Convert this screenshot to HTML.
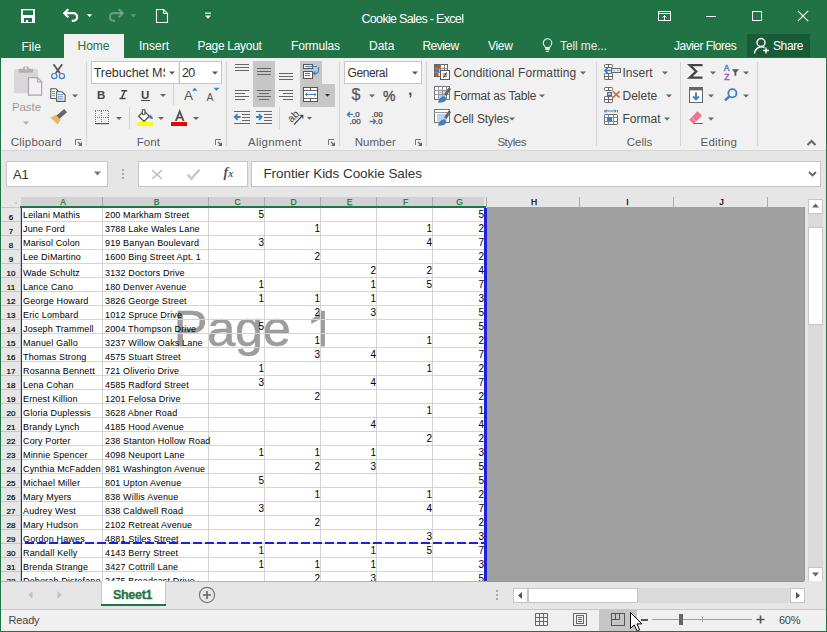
<!DOCTYPE html>
<html><head><meta charset="utf-8"><title>Cookie Sales - Excel</title>
<style>
html,body{margin:0;padding:0;}
body{width:827px;height:632px;position:relative;overflow:hidden;background:#e6e6e6;font-family:"Liberation Sans",sans-serif;}
.t{position:absolute;white-space:nowrap;line-height:20px;font-family:"Liberation Sans",sans-serif;}
.r{position:absolute;}
.s{position:absolute;overflow:visible;}
</style></head><body>
<div class="r" style="left:0px;top:0px;width:827px;height:58px;background:#217346;"></div>
<svg class="s" style="left:20px;top:8px;" width="16" height="16" viewBox="0 0 16 16"><rect x="1" y="1" width="14" height="14" fill="#fff"/><rect x="3" y="2.3" width="10" height="4.7" fill="#217346"/><rect x="4" y="10" width="8" height="4" fill="#217346"/><rect x="6" y="12" width="2" height="2" fill="#fff"/></svg>
<svg class="s" style="left:62px;top:8px;" width="18" height="16" viewBox="0 0 18 16"><path d="M6.3 1.2L2.2 5.2L6.3 9.2" fill="none" stroke="#fff" stroke-width="2.2"/><path d="M3 5.2H11.3a3.8 3.8 0 0 1 0 7.6H9.8" fill="none" stroke="#fff" stroke-width="2.2"/></svg>
<svg class="s" style="left:86px;top:13px;" width="7" height="5" viewBox="0 0 7 5"><path d="M0.8 1.2h5.4l-2.7 3z" fill="#fff"/></svg>
<svg class="s" style="left:107px;top:8px;" width="18" height="16" viewBox="0 0 18 16"><path d="M11.7 1.2L15.8 5.2L11.7 9.2" fill="none" stroke="rgba(255,255,255,0.3)" stroke-width="2.2"/><path d="M15 5.2H6.7a3.8 3.8 0 0 0 0 7.6H8.2" fill="none" stroke="rgba(255,255,255,0.3)" stroke-width="2.2"/></svg>
<svg class="s" style="left:130px;top:13px;" width="7" height="5" viewBox="0 0 7 5"><path d="M0.8 1.2h5.4l-2.7 3z" fill="rgba(255,255,255,0.3)"/></svg>
<svg class="s" style="left:154px;top:8px;" width="16" height="16" viewBox="0 0 16 16"><path d="M2.5 1.5H9.5L13.5 5.5V14.5H2.5Z" fill="none" stroke="#fff" stroke-width="1.1"/><path d="M9.5 1.5V5.5H13.5" fill="none" stroke="#fff" stroke-width="1.1"/></svg>
<svg class="s" style="left:204px;top:12px;" width="8" height="8" viewBox="0 0 8 8"><rect x="1" y="0.6" width="6" height="1.1" fill="#fff"/><path d="M1 3.5h6l-3 3.2z" fill="#fff"/></svg>
<div class="t" style="left:361.5px;top:8.67px;font-size:12.5px;color:#fff;font-weight:400;letter-spacing:-0.68px;">Cookie Sales - Excel</div>
<svg class="s" style="left:657px;top:10px;" width="16" height="12" viewBox="0 0 16 12"><rect x="1.5" y="1.5" width="12" height="9" fill="none" stroke="#fff" stroke-width="1"/><path d="M1.5 3.5h12" stroke="#fff" stroke-width="1"/><path d="M7.5 10V5.5M5.5 7.5L7.5 5.5L9.5 7.5" fill="none" stroke="#fff" stroke-width="1"/></svg>
<div class="r" style="left:706px;top:16px;width:10px;height:1px;background:#fff;"></div>
<svg class="s" style="left:751px;top:10px;" width="12" height="12" viewBox="0 0 12 12"><rect x="1.5" y="1.5" width="9" height="9" fill="none" stroke="#fff" stroke-width="1"/></svg>
<svg class="s" style="left:797px;top:10px;" width="12" height="12" viewBox="0 0 12 12"><path d="M0.8 0.8L11.2 11.2M11.2 0.8L0.8 11.2" stroke="#fff" stroke-width="1.1"/></svg>
<div class="r" style="left:64px;top:34px;width:60px;height:24px;background:#f1f1f1;"></div>
<div class="t" style="left:21.5px;top:36.84px;font-size:12px;color:#ffffff;font-weight:400;letter-spacing:0px;">File</div>
<div class="t" style="left:77.5px;top:35.84px;font-size:12px;color:#217346;font-weight:400;letter-spacing:0px;">Home</div>
<div class="t" style="left:139px;top:35.84px;font-size:12px;color:#ffffff;font-weight:400;letter-spacing:0px;">Insert</div>
<div class="t" style="left:197.5px;top:35.84px;font-size:12px;color:#ffffff;font-weight:400;letter-spacing:-0.3px;">Page Layout</div>
<div class="t" style="left:291px;top:35.84px;font-size:12px;color:#ffffff;font-weight:400;letter-spacing:-0.15px;">Formulas</div>
<div class="t" style="left:369px;top:35.84px;font-size:12px;color:#ffffff;font-weight:400;letter-spacing:0px;">Data</div>
<div class="t" style="left:422.5px;top:35.84px;font-size:12px;color:#ffffff;font-weight:400;letter-spacing:-0.55px;">Review</div>
<div class="t" style="left:488px;top:35.84px;font-size:12px;color:#ffffff;font-weight:400;letter-spacing:-0.3px;">View</div>
<svg class="s" style="left:541px;top:38px;" width="13" height="15" viewBox="0 0 13 15"><path d="M4.6 9.6C3.1 8.1 2.2 6.7 2.2 5.1a4.3 4.3 0 0 1 8.6 0c0 1.6-.9 3-2.4 4.5z" fill="none" stroke="#f0f4f1" stroke-width="1.1"/><rect x="4.3" y="10.1" width="4.4" height="1.9" fill="#f0f4f1"/><rect x="4.8" y="12.9" width="3.4" height="1" fill="#f0f4f1"/></svg>
<div class="t" style="left:560px;top:35.84px;font-size:12px;color:#e3ede6;font-weight:400;letter-spacing:-0.1px;">Tell me...</div>
<div class="t" style="left:674px;top:35.84px;font-size:12px;color:#ffffff;font-weight:400;letter-spacing:-0.5px;">Javier Flores</div>
<div class="r" style="left:747px;top:34px;width:63px;height:23px;background:#185c37;"></div>
<svg class="s" style="left:753px;top:37px;" width="18" height="18" viewBox="0 0 18 18"><circle cx="8" cy="5.5" r="4" fill="none" stroke="#fff" stroke-width="1.4"/><path d="M1.5 16.5a7 7 0 0 1 10-6" fill="none" stroke="#fff" stroke-width="1.4"/><path d="M13 10.5v6M10 13.5h6" stroke="#fff" stroke-width="1.4"/></svg>
<div class="t" style="left:773px;top:35.84px;font-size:12px;color:#ffffff;font-weight:400;letter-spacing:-0.4px;">Share</div>
<div class="r" style="left:1px;top:58px;width:825px;height:92px;background:#f1f1f1;"></div>
<div class="r" style="left:1px;top:150px;width:825px;height:1px;background:#d5d5d5;"></div>
<div class="r" style="left:86px;top:62px;width:1px;height:84px;background:#d4d4d4;"></div>
<div class="r" style="left:226px;top:62px;width:1px;height:84px;background:#d4d4d4;"></div>
<div class="r" style="left:339px;top:62px;width:1px;height:84px;background:#d4d4d4;"></div>
<div class="r" style="left:426px;top:62px;width:1px;height:84px;background:#d4d4d4;"></div>
<div class="r" style="left:596px;top:62px;width:1px;height:84px;background:#d4d4d4;"></div>
<div class="r" style="left:680px;top:62px;width:1px;height:84px;background:#d4d4d4;"></div>
<div class="r" style="left:757px;top:62px;width:1px;height:84px;background:#d4d4d4;"></div>
<div class="t" style="left:10.8px;top:132.02px;font-size:11.5px;color:#5c5c5c;font-weight:400;letter-spacing:0.2px;">Clipboard</div>
<div class="t" style="left:136.7px;top:132.02px;font-size:11.5px;color:#5c5c5c;font-weight:400;letter-spacing:0.1px;">Font</div>
<div class="t" style="left:248px;top:132.02px;font-size:11.5px;color:#5c5c5c;font-weight:400;letter-spacing:0.25px;">Alignment</div>
<div class="t" style="left:354.7px;top:132.02px;font-size:11.5px;color:#5c5c5c;font-weight:400;letter-spacing:0.05px;">Number</div>
<div class="t" style="left:497.4px;top:132.02px;font-size:11.5px;color:#5c5c5c;font-weight:400;letter-spacing:-0.45px;">Styles</div>
<div class="t" style="left:626.7px;top:132.02px;font-size:11.5px;color:#5c5c5c;font-weight:400;letter-spacing:0.0px;">Cells</div>
<div class="t" style="left:700.6px;top:132.02px;font-size:11.5px;color:#5c5c5c;font-weight:400;letter-spacing:0.2px;">Editing</div>
<svg class="s" style="left:74px;top:138px;" width="9" height="9" viewBox="0 0 9 9"><path d="M1.5 7V1.5H7" fill="none" stroke="#777" stroke-width="1"/><path d="M8 4V8H4z" fill="#666"/><path d="M4 4L6.5 6.5" stroke="#666" stroke-width="1.2"/></svg>
<svg class="s" style="left:214px;top:138px;" width="9" height="9" viewBox="0 0 9 9"><path d="M1.5 7V1.5H7" fill="none" stroke="#777" stroke-width="1"/><path d="M8 4V8H4z" fill="#666"/><path d="M4 4L6.5 6.5" stroke="#666" stroke-width="1.2"/></svg>
<svg class="s" style="left:327px;top:138px;" width="9" height="9" viewBox="0 0 9 9"><path d="M1.5 7V1.5H7" fill="none" stroke="#777" stroke-width="1"/><path d="M8 4V8H4z" fill="#666"/><path d="M4 4L6.5 6.5" stroke="#666" stroke-width="1.2"/></svg>
<svg class="s" style="left:414px;top:138px;" width="9" height="9" viewBox="0 0 9 9"><path d="M1.5 7V1.5H7" fill="none" stroke="#777" stroke-width="1"/><path d="M8 4V8H4z" fill="#666"/><path d="M4 4L6.5 6.5" stroke="#666" stroke-width="1.2"/></svg>
<svg class="s" style="left:806px;top:138.5px;" width="11" height="7" viewBox="0 0 11 7"><path d="M1.5 6L5.5 2L9.5 6" fill="none" stroke="#666" stroke-width="2.1"/></svg>
<svg class="s" style="left:13px;top:65px;" width="32" height="33" viewBox="0 0 32 33"><rect x="1" y="4" width="24" height="24.3" rx="1.5" fill="#d9d6d9"/><rect x="10" y="1.6" width="6" height="4" rx="1.6" fill="#b3b0b3"/><rect x="5.8" y="3.8" width="14.2" height="3.9" rx="0.8" fill="#b3b0b3"/><circle cx="13" cy="3.4" r="1.1" fill="#eeeeee"/><path d="M15.5 12.7H24.5L28.6 16.8V30.2H15.5Z" fill="#f4eff4" stroke="#a8a5a8" stroke-width="1.2"/><path d="M24.3 13.2V17H28.2" fill="none" stroke="#a8a5a8" stroke-width="1"/></svg>
<div class="t" style="left:11.9px;top:97.02px;font-size:11.5px;color:#9c9c9c;font-weight:400;letter-spacing:-0.05px;">Paste</div>
<svg class="s" style="left:23px;top:120.5px;" width="6" height="4" viewBox="0 0 6 4"><path d="M0 0.5h6l-3 3z" fill="#a8a8a8"/></svg>
<svg class="s" style="left:46px;top:60px;" width="36" height="68" viewBox="0 0 36 68"><path d="M7.5 4.3L14 13.3M16.2 4.3L9.7 13.3" stroke="#555" stroke-width="1.8"/><circle cx="8.3" cy="16.1" r="2.6" fill="none" stroke="#3f7fc6" stroke-width="1.2"/><circle cx="15.9" cy="16.1" r="2.6" fill="none" stroke="#3f7fc6" stroke-width="1.2"/><path d="M4.8 28.7H9.8L12.2 31.1V38.5H4.8Z" fill="#fff" stroke="#555" stroke-width="1.1"/><rect x="6.2" y="31" width="3" height="0.9" fill="#3f7fc6"/><rect x="6.2" y="33.1" width="3" height="0.9" fill="#3f7fc6"/><rect x="6.2" y="35.3" width="3" height="0.9" fill="#3f7fc6"/><path d="M10.7 31.7H16L19.1 34.8V41.4H10.7Z" fill="#fff" stroke="#555" stroke-width="1.1"/><rect x="12" y="34.3" width="5.3" height="0.9" fill="#3f7fc6"/><rect x="12" y="36.4" width="5.3" height="0.9" fill="#3f7fc6"/><rect x="12" y="38.5" width="5.3" height="0.9" fill="#3f7fc6"/><path d="M4.5 57.5L10.4 54.6L14.8 60L11.5 64.6Z" fill="#e8b865"/><path d="M12 57.2L19.6 50.6" stroke="#666" stroke-width="4.4"/></svg>
<svg class="s" style="left:72px;top:94px;" width="6" height="4" viewBox="0 0 6 4"><path d="M0 0.5h6l-3 3z" fill="#666"/></svg>
<div class="r" style="left:91px;top:61px;width:131px;height:23px;background:#fff;box-sizing:border-box;border:1px solid #c6c6c6"></div>
<div class="r" style="left:178px;top:61px;width:2px;height:23px;background:#c6c6c6;"></div>
<div class="r" style="left:178px;top:62px;width:0.6px;height:21px;background:#e8e8e8;"></div>
<div class="r" style="left:92px;top:62px;width:73px;height:21px;overflow:hidden">
<div class="t" style="left:1.8px;top:0.67px;font-size:12.5px;color:#333;font-weight:400;letter-spacing:-0.1px;">Trebuchet MS</div>
</div>
<svg class="s" style="left:169px;top:71px;" width="6" height="4" viewBox="0 0 6 4"><path d="M0 0.5h6l-3 3z" fill="#555"/></svg>
<div class="t" style="left:182px;top:62.67px;font-size:12.5px;color:#333;font-weight:400;letter-spacing:-0.6px;">20</div>
<svg class="s" style="left:212px;top:71px;" width="6" height="4" viewBox="0 0 6 4"><path d="M0 0.5h6l-3 3z" fill="#555"/></svg>
<div class="t" style="left:97px;top:85.02px;font-size:11.5px;color:#444;font-weight:700;letter-spacing:0px;">B</div>
<div class="t" style="left:141px;top:85.02px;font-size:11.5px;color:#444;font-weight:700;letter-spacing:0px;">U</div>
<div class="r" style="left:141px;top:100px;width:9px;height:1px;background:#444;"></div>
<div class="t" style="left:184px;top:86.32px;font-size:13.5px;color:#555;font-weight:400;letter-spacing:0px;">A</div>
<div class="t" style="left:206.5px;top:87.36px;font-size:10.5px;color:#555;font-weight:400;letter-spacing:0px;">A</div>
<svg class="s" style="left:0;top:0" width="230" height="130"><path d="M121.2 90.8h6M119.5 98.4h6M124.9 90.8L121.6 98.4" fill="none" stroke="#444" stroke-width="1.5"/><path d="M160 94h6l-3 3z" fill="#666"/><path d="M192 90.8h5.5l-2.75-3z" fill="#3f7fc6"/><path d="M213.5 87.8h6l-3 3z" fill="#3f7fc6"/><path d="M95 110.5h14" stroke="#777" stroke-width="1" stroke-dasharray="1 1"/><path d="M95 117.5h14" stroke="#777" stroke-width="1" stroke-dasharray="1 1"/><path d="M95.5 111v12" stroke="#777" stroke-width="1" stroke-dasharray="1 1"/><path d="M101.5 111v12" stroke="#777" stroke-width="1" stroke-dasharray="1 1"/><path d="M108.5 111v12" stroke="#777" stroke-width="1" stroke-dasharray="1 1"/><rect x="95" y="123" width="14" height="1.2" fill="#555"/><path d="M116 117h6l-3 3z" fill="#666"/><path d="M138.7 116.2L144 110.9L149.3 116.2L144 121.5Z" fill="#fff" stroke="#444" stroke-width="1.2"/><rect x="142.3" y="109.8" width="2.6" height="4.5" fill="#fff" stroke="#444" stroke-width="1"/><path d="M149.5 114.5c2 0.8 3.3 2.2 3.5 4.3c-1 .5-2.5 .3-3.5-.8z" fill="#3f7fc6"/><rect x="137" y="122" width="16" height="4" fill="#ffff00"/><path d="M158 117h6l-3 3z" fill="#666"/><path d="M175.8 121L179.7 111.5L183.6 121M177.3 117.6h4.8" fill="none" stroke="#555" stroke-width="1.9"/><rect x="171" y="122" width="16" height="4" fill="#ee0000"/><path d="M193 117h6l-3 3z" fill="#666"/></svg>
<div class="r" style="left:173px;top:84px;width:1px;height:21px;background:#d4d4d4;"></div>
<div class="r" style="left:129px;top:107px;width:1px;height:22px;background:#d4d4d4;"></div>
<div class="r" style="left:253px;top:61px;width:22px;height:46px;background:#c6c6c6;"></div>
<div class="r" style="left:300px;top:61px;width:22px;height:23px;background:#c6c6c6;"></div>
<div class="r" style="left:300px;top:84px;width:35px;height:23px;background:#c6c6c6;"></div>
<svg class="s" style="left:0;top:0" width="340" height="130"><rect x="235" y="64" width="14" height="1" fill="#666"/><rect x="235" y="67" width="14" height="1" fill="#666"/><rect x="235" y="70" width="14" height="1" fill="#666"/><rect x="257" y="68" width="14" height="1" fill="#666"/><rect x="257" y="71" width="14" height="1" fill="#666"/><rect x="257" y="74" width="14" height="1" fill="#666"/><rect x="279" y="73" width="14" height="1" fill="#666"/><rect x="279" y="76" width="14" height="1" fill="#666"/><rect x="279" y="79" width="14" height="1" fill="#666"/><rect x="235" y="90" width="14" height="1" fill="#666"/><rect x="257" y="90" width="14" height="1" fill="#666"/><rect x="279" y="90" width="14" height="1" fill="#666"/><rect x="235" y="93" width="10" height="1" fill="#666"/><rect x="259" y="93" width="10" height="1" fill="#666"/><rect x="283" y="93" width="10" height="1" fill="#666"/><rect x="235" y="96" width="14" height="1" fill="#666"/><rect x="257" y="96" width="14" height="1" fill="#666"/><rect x="279" y="96" width="14" height="1" fill="#666"/><rect x="235" y="99" width="10" height="1" fill="#666"/><rect x="259" y="99" width="10" height="1" fill="#666"/><rect x="283" y="99" width="10" height="1" fill="#666"/><rect x="234" y="111" width="16" height="1" fill="#666"/><rect x="234" y="123" width="16" height="1" fill="#666"/><rect x="242" y="114" width="8" height="1" fill="#666"/><rect x="242" y="117" width="8" height="1" fill="#666"/><rect x="242" y="120" width="8" height="1" fill="#666"/><rect x="256" y="111" width="16" height="1" fill="#666"/><rect x="256" y="123" width="16" height="1" fill="#666"/><rect x="264" y="114" width="8" height="1" fill="#666"/><rect x="264" y="117" width="8" height="1" fill="#666"/><rect x="264" y="120" width="8" height="1" fill="#666"/><rect x="303.5" y="64.5" width="9" height="4" fill="#fff" stroke="#555" stroke-width="1"/><rect x="303.5" y="71.5" width="9" height="7" fill="#fff" stroke="#555" stroke-width="1"/><rect x="305" y="66" width="12" height="1" fill="#3f7fc6"/><rect x="305" y="73" width="5" height="1" fill="#3f7fc6"/><rect x="305" y="75" width="5" height="1" fill="#3f7fc6"/><path d="M318.5 67V70.5a2.8 2.8 0 0 1-2.8 2.8H313.5M315.3 71.3L313.3 73.3L315.3 75.3" fill="none" stroke="#3f7fc6" stroke-width="1.2"/><rect x="303.5" y="87.5" width="14" height="14" fill="#fff" stroke="#555" stroke-width="1"/><rect x="304" y="90" width="13" height="1" fill="#666"/><rect x="304" y="98" width="13" height="1" fill="#666"/><rect x="310" y="88" width="1" height="2" fill="#555"/><rect x="310" y="99" width="1" height="2" fill="#555"/><path d="M305.5 94.5h10.5M307.3 92.7L305.5 94.5L307.3 96.3M314.2 92.7L316 94.5L314.2 96.3" fill="none" stroke="#3f7fc6" stroke-width="1"/><path d="M325 94h5l-2.5 2.8z" fill="#333"/><path d="M235 117h5.5M237.6 114.2L234.8 117L237.6 119.8" fill="none" stroke="#3f7fc6" stroke-width="1.8"/><path d="M256 117h5.5M258.9 114.2L261.7 117L258.9 119.8" fill="none" stroke="#3f7fc6" stroke-width="1.8"/><text x="0" y="0" transform="translate(291.5 123) rotate(-45)" font-family="Liberation Sans" font-size="10.5" fill="#444">ab</text><path d="M294 124.5L302.5 115.5M299.5 115.3h3.3v3.3" fill="none" stroke="#444" stroke-width="1.1"/><path d="M307 117h5l-2.5 2.7z" fill="#666"/></svg>
<div class="r" style="left:279px;top:107px;width:1px;height:22px;background:#d4d4d4;"></div>
<div class="r" style="left:344px;top:61px;width:78px;height:23px;background:#fff;box-sizing:border-box;border:1px solid #c6c6c6"></div>
<div class="t" style="left:347.5px;top:62.84px;font-size:12px;color:#333;font-weight:400;letter-spacing:-0.4px;">General</div>
<svg class="s" style="left:412px;top:71px;" width="6" height="4" viewBox="0 0 6 4"><path d="M0 0.5h6l-3 3z" fill="#555"/></svg>
<div class="t" style="left:351.5px;top:84.96px;font-size:16px;color:#555;font-weight:400;letter-spacing:0px;-webkit-text-stroke:0.2px #555">$</div>
<svg class="s" style="left:369px;top:94px;" width="6" height="4" viewBox="0 0 6 4"><path d="M0 0.5h6l-3 3z" fill="#666"/></svg>
<div class="t" style="left:383px;top:86.15px;font-size:14px;color:#555;font-weight:400;letter-spacing:0px;-webkit-text-stroke:0.4px #555">%</div>
<div class="t" style="left:408px;top:79.96px;font-size:16px;color:#555;font-weight:700;letter-spacing:0px;">,</div>
<svg class="s" style="left:0;top:0" width="430" height="130"><path d="M347.5 114.4h5.5M350 111.9L347.4 114.4L350 116.9" fill="none" stroke="#3f7fc6" stroke-width="1.4"/><text x="353" y="116.6" font-family="Liberation Sans" font-size="8" fill="#444" stroke="#444" stroke-width="0.25">.0</text><text x="349.5" y="123.7" font-family="Liberation Sans" font-size="8" fill="#444" stroke="#444" stroke-width="0.25">.00</text><text x="371.5" y="116.6" font-family="Liberation Sans" font-size="8" fill="#444" stroke="#444" stroke-width="0.25">.00</text><path d="M369.5 121.5h6M373.2 119L375.7 121.5L373.2 124" fill="none" stroke="#3f7fc6" stroke-width="1.4"/><text x="375.8" y="123.7" font-family="Liberation Sans" font-size="8" fill="#444" stroke="#444" stroke-width="0.25">.0</text></svg>
<svg class="s" style="left:0;top:0" width="460" height="130"><rect x="434.5" y="64.5" width="13" height="12" fill="#fff" stroke="#666" stroke-width="1"/><path d="M434.5 68.5h13M434.5 72.5h13M440.5 64.5v12M444.5 64.5v12" stroke="#888" stroke-width="1"/><rect x="435" y="65" width="5.5" height="3" fill="#d24726"/><rect x="435" y="69" width="4.5" height="3" fill="#3f7fc6"/><rect x="435" y="73" width="3.5" height="3" fill="#d24726"/><rect x="440.5" y="70.5" width="9" height="9" fill="#fff" stroke="#555" stroke-width="1"/><path d="M442.8 74h4.4M442.8 76.2h4.4M446.5 72.3L443.5 78" stroke="#333" stroke-width="0.9"/></svg>
<div class="t" style="left:453.4px;top:63.14px;font-size:12px;color:#444;font-weight:400;letter-spacing:0.1px;">Conditional Formatting</div>
<svg class="s" style="left:580px;top:71px;" width="6" height="4" viewBox="0 0 6 4"><path d="M0 0.5h6l-3 3z" fill="#666"/></svg>
<svg class="s" style="left:0;top:0" width="460" height="130"><rect x="434.5" y="86.5" width="15" height="13" fill="#fff" stroke="#777" stroke-width="1"/><rect x="438" y="90" width="8" height="9" fill="#bcd2ee"/><path d="M434.5 90.5h15M434.5 94.5h15M438.5 86.5v13M442.5 86.5v13M446.5 86.5v13" stroke="#999" stroke-width="1"/><path d="M449.8 88.3L445.3 95.3" stroke="#666" stroke-width="3"/><path d="M438 102.6C438.5 99.5 440.5 96.8 443.8 96.2C445.8 96.6 446.6 98.3 446 100C444.5 102 441.5 102.8 438 102.6Z" fill="#3f7fc6"/></svg>
<div class="t" style="left:453.4px;top:85.84px;font-size:12px;color:#444;font-weight:400;letter-spacing:-0.2px;">Format as Table</div>
<svg class="s" style="left:539px;top:94px;" width="6" height="4" viewBox="0 0 6 4"><path d="M0 0.5h6l-3 3z" fill="#666"/></svg>
<svg class="s" style="left:0;top:0" width="460" height="130"><rect x="434.5" y="109.5" width="15" height="13" fill="#fff" stroke="#777" stroke-width="1"/><path d="M434.5 112.5h15" stroke="#999" stroke-width="1"/><rect x="437" y="114" width="10" height="7.5" fill="#bcd2ee"/><path d="M449.8 111.3L445.3 118.3" stroke="#666" stroke-width="3"/><path d="M438 125.6C438.5 122.5 440.5 119.8 443.8 119.2C445.8 119.6 446.6 121.3 446 123C444.5 125 441.5 125.8 438 125.6Z" fill="#3f7fc6"/></svg>
<div class="t" style="left:453.4px;top:108.64px;font-size:12px;color:#444;font-weight:400;letter-spacing:-0.1px;">Cell Styles</div>
<svg class="s" style="left:509px;top:117px;" width="6" height="4" viewBox="0 0 6 4"><path d="M0 0.5h6l-3 3z" fill="#666"/></svg>
<svg class="s" style="left:0;top:0" width="625" height="130"><rect x="604.5" y="64.5" width="8" height="3" rx="0.8" fill="#fff" stroke="#666" stroke-width="1"/><path d="M608.5 64.5v3" stroke="#666"/><rect x="604.5" y="73.5" width="8" height="6" rx="0.8" fill="#fff" stroke="#666" stroke-width="1"/><path d="M604.5 76.5h8M608.5 73.5v6" stroke="#666"/><rect x="611.5" y="68.5" width="9" height="4" fill="#fff" stroke="#666" stroke-width="1"/><rect x="612.5" y="69.5" width="3" height="2" fill="#a9c4e6"/><rect x="616.5" y="69.5" width="3" height="2" fill="#a9c4e6"/><path d="M610.8 70.5H605M607.6 67.9L605 70.5L607.6 73.1" fill="none" stroke="#3f7fc6" stroke-width="1.6"/></svg>
<div class="t" style="left:622.5px;top:62.84px;font-size:12px;color:#444;font-weight:400;letter-spacing:0px;">Insert</div>
<svg class="s" style="left:662px;top:71px;" width="6" height="4" viewBox="0 0 6 4"><path d="M0 0.5h6l-3 3z" fill="#666"/></svg>
<svg class="s" style="left:0;top:0" width="625" height="130"><rect x="604.5" y="87.5" width="8" height="3" rx="0.8" fill="#fff" stroke="#666" stroke-width="1"/><path d="M608.5 87.5v3" stroke="#666"/><rect x="604.5" y="96.5" width="8" height="6" rx="0.8" fill="#fff" stroke="#666" stroke-width="1"/><path d="M604.5 99.5h8M608.5 96.5v6" stroke="#666"/><rect x="607.5" y="92.5" width="4" height="3" fill="#a9c4e6" stroke="#666" stroke-width="1"/><path d="M612.8 91.3L619.6 97.6M619.6 91.3L612.8 97.6" stroke="#e0653a" stroke-width="1.6"/></svg>
<div class="t" style="left:622.5px;top:86.14px;font-size:12px;color:#444;font-weight:400;letter-spacing:0px;">Delete</div>
<svg class="s" style="left:666px;top:94px;" width="6" height="4" viewBox="0 0 6 4"><path d="M0 0.5h6l-3 3z" fill="#666"/></svg>
<svg class="s" style="left:0;top:0" width="625" height="130"><path d="M605.5 111h10.5M607 109.6L605.3 111L607 112.4M614.5 109.6L616.2 111L614.5 112.4" fill="none" stroke="#3f7fc6" stroke-width="1"/><rect x="604.3" y="110" width="1" height="2.5" fill="#3f7fc6"/><rect x="617" y="110" width="1" height="2.5" fill="#3f7fc6"/><rect x="604.5" y="114.5" width="13" height="10" rx="0.8" fill="#fff" stroke="#666" stroke-width="1"/><path d="M604.5 117.5h13M604.5 121.5h13M608.5 114.5v10M613.5 114.5v10" stroke="#888" stroke-width="1"/><rect x="607" y="117" width="5" height="4.5" fill="#3f7fc6"/></svg>
<div class="t" style="left:622.5px;top:109.14px;font-size:12px;color:#444;font-weight:400;letter-spacing:0px;">Format</div>
<svg class="s" style="left:664px;top:117px;" width="6" height="4" viewBox="0 0 6 4"><path d="M0 0.5h6l-3 3z" fill="#666"/></svg>
<svg class="s" style="left:0;top:0" width="760" height="130"><path d="M702.5 65.2H689.8L696.3 71.4L689.8 77.6H702.5" fill="none" stroke="#444" stroke-width="2.3"/><path d="M710 71.5h6l-3 3z" fill="#666"/><text x="723.8" y="70.8" font-family="Liberation Sans" font-size="8.5" font-weight="400" fill="#3f7fc6" stroke="#3f7fc6" stroke-width="0.4">A</text><text x="724.3" y="80" font-family="Liberation Sans" font-size="8.5" font-weight="400" fill="#9a5cc8" stroke="#9a5cc8" stroke-width="0.4">Z</text><path d="M731.8 69.2h7.2l-2.7 3.3v3.2h-1.8v-3.2z" fill="#555"/><path d="M743 71.5h6l-3 3z" fill="#666"/><rect x="689.5" y="87.5" width="13" height="15" fill="#fff" stroke="#666" stroke-width="1"/><rect x="689" y="87" width="14" height="3.4" fill="#666"/><path d="M696 92.3v7M693 96.3l3 3l3-3" fill="none" stroke="#3f7fc6" stroke-width="1.9"/><path d="M708 94.5h6l-3 3z" fill="#666"/><circle cx="732.4" cy="93.3" r="4.1" fill="none" stroke="#3f7fc6" stroke-width="1.8"/><path d="M729.3 96.5L725 100.4" stroke="#3f7fc6" stroke-width="2.5"/><path d="M743 94.5h6l-3 3z" fill="#666"/><path d="M689.2 119.8L697.5 111.2L702 115.4L693.6 124Z" fill="#e8758a"/><path d="M691.6 117.3L696 121.6" stroke="#f3c2cc" stroke-width="0.9"/><rect x="694" y="123" width="9" height="0.9" fill="#555"/><path d="M708 117.5h6l-3 3z" fill="#666"/></svg>
<div class="r" style="left:1px;top:151px;width:825px;height:46px;background:#e6e6e6;"></div>
<div class="r" style="left:6px;top:161px;width:102px;height:26px;background:#fff;box-sizing:border-box;border:1px solid #c6c6c6"></div>
<div class="t" style="left:13px;top:164.50px;font-size:13px;color:#333;font-weight:400;letter-spacing:-0.2px;">A1</div>
<svg class="s" style="left:94px;top:171px;" width="7" height="5" viewBox="0 0 7 5"><path d="M0 0.5h7l-3.5 4z" fill="#777"/></svg>
<div class="r" style="left:122px;top:169px;width:2px;height:2px;background:#a8a8a8;"></div>
<div class="r" style="left:122px;top:173px;width:2px;height:2px;background:#a8a8a8;"></div>
<div class="r" style="left:122px;top:177px;width:2px;height:2px;background:#a8a8a8;"></div>
<div class="r" style="left:138px;top:161px;width:110px;height:26px;background:#fff;box-sizing:border-box;border:1px solid #c6c6c6"></div>
<svg class="s" style="left:151px;top:169px;" width="12" height="11" viewBox="0 0 12 11"><path d="M1.2 1.2L10.8 9.8M10.8 1.2L1.2 9.8" stroke="#c4c4c4" stroke-width="1.6"/></svg>
<svg class="s" style="left:186px;top:168px;" width="15" height="13" viewBox="0 0 15 13"><path d="M1.5 6.5L5.5 10.8L13.5 1.5" fill="none" stroke="#cbcbcb" stroke-width="2.6"/></svg>
<div class="t" style="left:223.5px;top:162.65px;font-size:14px;color:#555;font-weight:400;letter-spacing:0px;font-family:Liberation Serif,serif;font-weight:700"><i>f</i><span style="font-size:10px;position:relative;top:0.5px"><i>x</i></span></div>
<div class="r" style="left:251px;top:161px;width:570px;height:26px;background:#fff;box-sizing:border-box;border:1px solid #c6c6c6"></div>
<div class="t" style="left:263.4px;top:164.32px;font-size:13.5px;color:#333;font-weight:400;letter-spacing:-0.05px;">Frontier Kids Cookie Sales</div>
<svg class="s" style="left:808px;top:171px;" width="9" height="6" viewBox="0 0 9 6"><path d="M1 1L4.5 4.5L8 1" fill="none" stroke="#666" stroke-width="1.8"/></svg>
<div class="r" style="left:1px;top:197px;width:20px;height:9px;background:#e6e6e6;"></div>
<svg class="s" style="left:14px;top:201px;" width="3" height="3" viewBox="0 0 3 3"><path d="M3 0V3H0z" fill="#c8c8c8"/></svg>
<div class="r" style="left:1px;top:207px;width:19px;height:1px;background:#c6c6c6;"></div>
<div class="r" style="left:21px;top:197px;width:463px;height:9px;background:#d2d2d2;"></div>
<div class="r" style="left:102px;top:197px;width:1px;height:9px;background:#ababab;"></div>
<div class="r" style="left:208px;top:197px;width:1px;height:9px;background:#ababab;"></div>
<div class="r" style="left:264px;top:197px;width:1px;height:9px;background:#ababab;"></div>
<div class="r" style="left:320px;top:197px;width:1px;height:9px;background:#ababab;"></div>
<div class="r" style="left:376px;top:197px;width:1px;height:9px;background:#ababab;"></div>
<div class="r" style="left:432px;top:197px;width:1px;height:9px;background:#ababab;"></div>
<div class="r" style="left:20px;top:206px;width:466px;height:2px;background:#217346;"></div>
<div class="t" style="left:22.5px;top:192.1px;width:81px;text-align:center;font-size:8.5px;color:#217346;font-weight:400;-webkit-text-stroke:0.25px #217346">A</div>
<div class="t" style="left:103.5px;top:192.1px;width:106px;text-align:center;font-size:8.5px;color:#217346;font-weight:400;-webkit-text-stroke:0.25px #217346">B</div>
<div class="t" style="left:209.5px;top:192.1px;width:56px;text-align:center;font-size:8.5px;color:#217346;font-weight:400;-webkit-text-stroke:0.25px #217346">C</div>
<div class="t" style="left:265.5px;top:192.1px;width:56px;text-align:center;font-size:8.5px;color:#217346;font-weight:400;-webkit-text-stroke:0.25px #217346">D</div>
<div class="t" style="left:321.5px;top:192.1px;width:56px;text-align:center;font-size:8.5px;color:#217346;font-weight:400;-webkit-text-stroke:0.25px #217346">E</div>
<div class="t" style="left:377.5px;top:192.1px;width:56px;text-align:center;font-size:8.5px;color:#217346;font-weight:400;-webkit-text-stroke:0.25px #217346">F</div>
<div class="t" style="left:433.5px;top:192.1px;width:52px;text-align:center;font-size:8.5px;color:#217346;font-weight:400;-webkit-text-stroke:0.25px #217346">G</div>
<div class="t" style="left:488px;top:192.1px;width:92px;text-align:center;font-size:8.5px;color:#000;font-weight:400;-webkit-text-stroke:0.25px #000">H</div>
<div class="t" style="left:581px;top:192.1px;width:93px;text-align:center;font-size:8.5px;color:#000;font-weight:400;-webkit-text-stroke:0.25px #000">I</div>
<div class="t" style="left:675px;top:192.1px;width:93px;text-align:center;font-size:8.5px;color:#000;font-weight:400;-webkit-text-stroke:0.25px #000">J</div>
<div class="r" style="left:486px;top:197px;width:1px;height:10px;background:#a9a9a9;"></div>
<div class="r" style="left:579px;top:197px;width:1px;height:10px;background:#a9a9a9;"></div>
<div class="r" style="left:673px;top:197px;width:1px;height:10px;background:#a9a9a9;"></div>
<div class="r" style="left:767px;top:197px;width:1px;height:10px;background:#a9a9a9;"></div>
<div class="r" style="left:487px;top:207px;width:318px;height:375px;background:#a0a0a0;box-sizing:border-box;border-right:1px solid #979797;border-bottom:1px solid #979797;border-bottom-right-radius:2px"></div>
<div class="r" style="left:1px;top:208px;width:19px;height:373px;background:#e6e6e6;"></div>
<div class="r" style="left:20px;top:208px;width:1px;height:373px;background:#c6c6c6;"></div>
<div class="r" style="left:21px;top:208px;width:465px;height:373px;background:#fff;"></div>
<div class="t" style="left:173.8px;top:319.30px;font-size:50.5px;color:#9d9d9d;font-weight:400;letter-spacing:-0.3px;-webkit-text-stroke:0.6px #9d9d9d">Page</div>
<svg class="s" style="left:305px;top:308px;" width="24" height="42" viewBox="0 0 24 42"><path d="M15.2 2.8H19.9V38.4H15.2V10.3C13.2 12.3 10.2 14.3 6.2 15.8V11.3C10.2 9.5 13.7 6.3 15.2 2.8Z" fill="#9d9d9d"/></svg>
<div class="r" style="left:0;top:0;width:827px;height:581px;overflow:hidden">
<div class="r" style="left:21px;top:221px;width:465px;height:1px;background:#d4d4d4;"></div>
<div class="r" style="left:1px;top:221px;width:19px;height:1px;background:#c6c6c6;"></div>
<div class="r" style="left:21px;top:235px;width:465px;height:1px;background:#d4d4d4;"></div>
<div class="r" style="left:1px;top:235px;width:19px;height:1px;background:#c6c6c6;"></div>
<div class="r" style="left:21px;top:249px;width:465px;height:1px;background:#d4d4d4;"></div>
<div class="r" style="left:1px;top:249px;width:19px;height:1px;background:#c6c6c6;"></div>
<div class="r" style="left:21px;top:263px;width:465px;height:1px;background:#d4d4d4;"></div>
<div class="r" style="left:1px;top:263px;width:19px;height:1px;background:#c6c6c6;"></div>
<div class="r" style="left:21px;top:277px;width:465px;height:1px;background:#d4d4d4;"></div>
<div class="r" style="left:1px;top:277px;width:19px;height:1px;background:#c6c6c6;"></div>
<div class="r" style="left:21px;top:291px;width:465px;height:1px;background:#d4d4d4;"></div>
<div class="r" style="left:1px;top:291px;width:19px;height:1px;background:#c6c6c6;"></div>
<div class="r" style="left:21px;top:305px;width:465px;height:1px;background:#d4d4d4;"></div>
<div class="r" style="left:1px;top:305px;width:19px;height:1px;background:#c6c6c6;"></div>
<div class="r" style="left:21px;top:319px;width:465px;height:1px;background:#d4d4d4;"></div>
<div class="r" style="left:1px;top:319px;width:19px;height:1px;background:#c6c6c6;"></div>
<div class="r" style="left:21px;top:333px;width:465px;height:1px;background:#d4d4d4;"></div>
<div class="r" style="left:1px;top:333px;width:19px;height:1px;background:#c6c6c6;"></div>
<div class="r" style="left:21px;top:347px;width:465px;height:1px;background:#d4d4d4;"></div>
<div class="r" style="left:1px;top:347px;width:19px;height:1px;background:#c6c6c6;"></div>
<div class="r" style="left:21px;top:361px;width:465px;height:1px;background:#d4d4d4;"></div>
<div class="r" style="left:1px;top:361px;width:19px;height:1px;background:#c6c6c6;"></div>
<div class="r" style="left:21px;top:375px;width:465px;height:1px;background:#d4d4d4;"></div>
<div class="r" style="left:1px;top:375px;width:19px;height:1px;background:#c6c6c6;"></div>
<div class="r" style="left:21px;top:389px;width:465px;height:1px;background:#d4d4d4;"></div>
<div class="r" style="left:1px;top:389px;width:19px;height:1px;background:#c6c6c6;"></div>
<div class="r" style="left:21px;top:403px;width:465px;height:1px;background:#d4d4d4;"></div>
<div class="r" style="left:1px;top:403px;width:19px;height:1px;background:#c6c6c6;"></div>
<div class="r" style="left:21px;top:417px;width:465px;height:1px;background:#d4d4d4;"></div>
<div class="r" style="left:1px;top:417px;width:19px;height:1px;background:#c6c6c6;"></div>
<div class="r" style="left:21px;top:431px;width:465px;height:1px;background:#d4d4d4;"></div>
<div class="r" style="left:1px;top:431px;width:19px;height:1px;background:#c6c6c6;"></div>
<div class="r" style="left:21px;top:445px;width:465px;height:1px;background:#d4d4d4;"></div>
<div class="r" style="left:1px;top:445px;width:19px;height:1px;background:#c6c6c6;"></div>
<div class="r" style="left:21px;top:459px;width:465px;height:1px;background:#d4d4d4;"></div>
<div class="r" style="left:1px;top:459px;width:19px;height:1px;background:#c6c6c6;"></div>
<div class="r" style="left:21px;top:473px;width:465px;height:1px;background:#d4d4d4;"></div>
<div class="r" style="left:1px;top:473px;width:19px;height:1px;background:#c6c6c6;"></div>
<div class="r" style="left:21px;top:487px;width:465px;height:1px;background:#d4d4d4;"></div>
<div class="r" style="left:1px;top:487px;width:19px;height:1px;background:#c6c6c6;"></div>
<div class="r" style="left:21px;top:501px;width:465px;height:1px;background:#d4d4d4;"></div>
<div class="r" style="left:1px;top:501px;width:19px;height:1px;background:#c6c6c6;"></div>
<div class="r" style="left:21px;top:515px;width:465px;height:1px;background:#d4d4d4;"></div>
<div class="r" style="left:1px;top:515px;width:19px;height:1px;background:#c6c6c6;"></div>
<div class="r" style="left:21px;top:529px;width:465px;height:1px;background:#d4d4d4;"></div>
<div class="r" style="left:1px;top:529px;width:19px;height:1px;background:#c6c6c6;"></div>
<div class="r" style="left:21px;top:543px;width:465px;height:1px;background:#d4d4d4;"></div>
<div class="r" style="left:1px;top:543px;width:19px;height:1px;background:#c6c6c6;"></div>
<div class="r" style="left:21px;top:557px;width:465px;height:1px;background:#d4d4d4;"></div>
<div class="r" style="left:1px;top:557px;width:19px;height:1px;background:#c6c6c6;"></div>
<div class="r" style="left:21px;top:571px;width:465px;height:1px;background:#d4d4d4;"></div>
<div class="r" style="left:1px;top:571px;width:19px;height:1px;background:#c6c6c6;"></div>
<div class="r" style="left:21px;top:585px;width:465px;height:1px;background:#d4d4d4;"></div>
<div class="r" style="left:1px;top:585px;width:19px;height:1px;background:#c6c6c6;"></div>
<div class="r" style="left:102px;top:208px;width:1px;height:373px;background:#d4d4d4;"></div>
<div class="r" style="left:208px;top:208px;width:1px;height:373px;background:#d4d4d4;"></div>
<div class="r" style="left:264px;top:208px;width:1px;height:373px;background:#d4d4d4;"></div>
<div class="r" style="left:320px;top:208px;width:1px;height:373px;background:#d4d4d4;"></div>
<div class="r" style="left:376px;top:208px;width:1px;height:373px;background:#d4d4d4;"></div>
<div class="r" style="left:432px;top:208px;width:1px;height:373px;background:#d4d4d4;"></div>
<div class="t" style="left:1px;top:207.73px;width:20px;text-align:center;font-size:8px;color:#000;font-weight:400;-webkit-text-stroke:0.2px #000">6</div>
<div class="r" style="left:23px;top:204px;width:79px;height:20px;overflow:hidden">
<div class="t" style="left:0px;top:0.88px;font-size:9px;color:#000;font-weight:400;letter-spacing:0.15px;">Leilani Mathis</div>
</div>
<div class="r" style="left:105px;top:204px;width:103px;height:20px;overflow:hidden">
<div class="t" style="left:0px;top:0.88px;font-size:9px;color:#000;font-weight:400;letter-spacing:0.15px;">200 Markham Street</div>
</div>
<div class="t" style="left:244px;top:204.53px;width:20px;text-align:right;font-size:10px;color:#000">5</div>
<div class="t" style="left:464px;top:204.53px;width:20px;text-align:right;font-size:10px;color:#000">5</div>
<div class="t" style="left:1px;top:221.73px;width:20px;text-align:center;font-size:8px;color:#000;font-weight:400;-webkit-text-stroke:0.2px #000">7</div>
<div class="r" style="left:23px;top:218px;width:79px;height:20px;overflow:hidden">
<div class="t" style="left:0px;top:0.88px;font-size:9px;color:#000;font-weight:400;letter-spacing:0.15px;">June Ford</div>
</div>
<div class="r" style="left:105px;top:218px;width:200px;height:20px;overflow:hidden">
<div class="t" style="left:0px;top:0.88px;font-size:9px;color:#000;font-weight:400;letter-spacing:0.15px;">3788 Lake Wales Lane</div>
</div>
<div class="t" style="left:300px;top:218.53px;width:20px;text-align:right;font-size:10px;color:#000">1</div>
<div class="t" style="left:412px;top:218.53px;width:20px;text-align:right;font-size:10px;color:#000">1</div>
<div class="t" style="left:464px;top:218.53px;width:20px;text-align:right;font-size:10px;color:#000">2</div>
<div class="t" style="left:1px;top:235.73px;width:20px;text-align:center;font-size:8px;color:#000;font-weight:400;-webkit-text-stroke:0.2px #000">8</div>
<div class="r" style="left:23px;top:232px;width:79px;height:20px;overflow:hidden">
<div class="t" style="left:0px;top:0.88px;font-size:9px;color:#000;font-weight:400;letter-spacing:0.15px;">Marisol Colon</div>
</div>
<div class="r" style="left:105px;top:232px;width:103px;height:20px;overflow:hidden">
<div class="t" style="left:0px;top:0.88px;font-size:9px;color:#000;font-weight:400;letter-spacing:0.15px;">919 Banyan Boulevard</div>
</div>
<div class="t" style="left:244px;top:232.53px;width:20px;text-align:right;font-size:10px;color:#000">3</div>
<div class="t" style="left:412px;top:232.53px;width:20px;text-align:right;font-size:10px;color:#000">4</div>
<div class="t" style="left:464px;top:232.53px;width:20px;text-align:right;font-size:10px;color:#000">7</div>
<div class="t" style="left:1px;top:249.73px;width:20px;text-align:center;font-size:8px;color:#000;font-weight:400;-webkit-text-stroke:0.2px #000">9</div>
<div class="r" style="left:23px;top:246px;width:79px;height:20px;overflow:hidden">
<div class="t" style="left:0px;top:0.88px;font-size:9px;color:#000;font-weight:400;letter-spacing:0.15px;">Lee DiMartino</div>
</div>
<div class="r" style="left:105px;top:246px;width:200px;height:20px;overflow:hidden">
<div class="t" style="left:0px;top:0.88px;font-size:9px;color:#000;font-weight:400;letter-spacing:0.15px;">1600 Bing Street Apt. 1</div>
</div>
<div class="t" style="left:300px;top:246.53px;width:20px;text-align:right;font-size:10px;color:#000">2</div>
<div class="t" style="left:464px;top:246.53px;width:20px;text-align:right;font-size:10px;color:#000">2</div>
<div class="t" style="left:1px;top:263.73px;width:20px;text-align:center;font-size:8px;color:#000;font-weight:400;-webkit-text-stroke:0.2px #000">10</div>
<div class="r" style="left:23px;top:260px;width:79px;height:20px;overflow:hidden">
<div class="t" style="left:0px;top:2.88px;font-size:9px;color:#000;font-weight:400;letter-spacing:0.15px;">Wade Schultz</div>
</div>
<div class="r" style="left:105px;top:260px;width:200px;height:20px;overflow:hidden">
<div class="t" style="left:0px;top:2.88px;font-size:9px;color:#000;font-weight:400;letter-spacing:0.15px;">3132 Doctors Drive</div>
</div>
<div class="t" style="left:356px;top:260.54px;width:20px;text-align:right;font-size:10px;color:#000">2</div>
<div class="t" style="left:412px;top:260.54px;width:20px;text-align:right;font-size:10px;color:#000">2</div>
<div class="t" style="left:464px;top:260.54px;width:20px;text-align:right;font-size:10px;color:#000">4</div>
<div class="t" style="left:1px;top:277.73px;width:20px;text-align:center;font-size:8px;color:#000;font-weight:400;-webkit-text-stroke:0.2px #000">11</div>
<div class="r" style="left:23px;top:274px;width:79px;height:20px;overflow:hidden">
<div class="t" style="left:0px;top:2.88px;font-size:9px;color:#000;font-weight:400;letter-spacing:0.15px;">Lance Cano</div>
</div>
<div class="r" style="left:105px;top:274px;width:103px;height:20px;overflow:hidden">
<div class="t" style="left:0px;top:2.88px;font-size:9px;color:#000;font-weight:400;letter-spacing:0.15px;">180 Denver Avenue</div>
</div>
<div class="t" style="left:244px;top:274.54px;width:20px;text-align:right;font-size:10px;color:#000">1</div>
<div class="t" style="left:356px;top:274.54px;width:20px;text-align:right;font-size:10px;color:#000">1</div>
<div class="t" style="left:412px;top:274.54px;width:20px;text-align:right;font-size:10px;color:#000">5</div>
<div class="t" style="left:464px;top:274.54px;width:20px;text-align:right;font-size:10px;color:#000">7</div>
<div class="t" style="left:1px;top:291.73px;width:20px;text-align:center;font-size:8px;color:#000;font-weight:400;-webkit-text-stroke:0.2px #000">12</div>
<div class="r" style="left:23px;top:288px;width:79px;height:20px;overflow:hidden">
<div class="t" style="left:0px;top:2.88px;font-size:9px;color:#000;font-weight:400;letter-spacing:0.15px;">George Howard</div>
</div>
<div class="r" style="left:105px;top:288px;width:103px;height:20px;overflow:hidden">
<div class="t" style="left:0px;top:2.88px;font-size:9px;color:#000;font-weight:400;letter-spacing:0.15px;">3826 George Street</div>
</div>
<div class="t" style="left:244px;top:288.54px;width:20px;text-align:right;font-size:10px;color:#000">1</div>
<div class="t" style="left:300px;top:288.54px;width:20px;text-align:right;font-size:10px;color:#000">1</div>
<div class="t" style="left:356px;top:288.54px;width:20px;text-align:right;font-size:10px;color:#000">1</div>
<div class="t" style="left:464px;top:288.54px;width:20px;text-align:right;font-size:10px;color:#000">3</div>
<div class="t" style="left:1px;top:305.73px;width:20px;text-align:center;font-size:8px;color:#000;font-weight:400;-webkit-text-stroke:0.2px #000">13</div>
<div class="r" style="left:23px;top:302px;width:79px;height:20px;overflow:hidden">
<div class="t" style="left:0px;top:2.88px;font-size:9px;color:#000;font-weight:400;letter-spacing:0.15px;">Eric Lombard</div>
</div>
<div class="r" style="left:105px;top:302px;width:200px;height:20px;overflow:hidden">
<div class="t" style="left:0px;top:2.88px;font-size:9px;color:#000;font-weight:400;letter-spacing:0.15px;">1012 Spruce Drive</div>
</div>
<div class="t" style="left:300px;top:302.54px;width:20px;text-align:right;font-size:10px;color:#000">2</div>
<div class="t" style="left:356px;top:302.54px;width:20px;text-align:right;font-size:10px;color:#000">3</div>
<div class="t" style="left:464px;top:302.54px;width:20px;text-align:right;font-size:10px;color:#000">5</div>
<div class="t" style="left:1px;top:319.73px;width:20px;text-align:center;font-size:8px;color:#000;font-weight:400;-webkit-text-stroke:0.2px #000">14</div>
<div class="r" style="left:23px;top:316px;width:79px;height:20px;overflow:hidden">
<div class="t" style="left:0px;top:2.88px;font-size:9px;color:#000;font-weight:400;letter-spacing:0.15px;">Joseph Trammell</div>
</div>
<div class="r" style="left:105px;top:316px;width:103px;height:20px;overflow:hidden">
<div class="t" style="left:0px;top:2.88px;font-size:9px;color:#000;font-weight:400;letter-spacing:0.15px;">2004 Thompson Drive</div>
</div>
<div class="t" style="left:244px;top:316.54px;width:20px;text-align:right;font-size:10px;color:#000">5</div>
<div class="t" style="left:464px;top:316.54px;width:20px;text-align:right;font-size:10px;color:#000">5</div>
<div class="t" style="left:1px;top:333.73px;width:20px;text-align:center;font-size:8px;color:#000;font-weight:400;-webkit-text-stroke:0.2px #000">15</div>
<div class="r" style="left:23px;top:330px;width:79px;height:20px;overflow:hidden">
<div class="t" style="left:0px;top:2.88px;font-size:9px;color:#000;font-weight:400;letter-spacing:0.15px;">Manuel Gallo</div>
</div>
<div class="r" style="left:105px;top:330px;width:200px;height:20px;overflow:hidden">
<div class="t" style="left:0px;top:2.88px;font-size:9px;color:#000;font-weight:400;letter-spacing:0.15px;">3237 Willow Oaks Lane</div>
</div>
<div class="t" style="left:300px;top:330.54px;width:20px;text-align:right;font-size:10px;color:#000">1</div>
<div class="t" style="left:412px;top:330.54px;width:20px;text-align:right;font-size:10px;color:#000">1</div>
<div class="t" style="left:464px;top:330.54px;width:20px;text-align:right;font-size:10px;color:#000">2</div>
<div class="t" style="left:1px;top:347.73px;width:20px;text-align:center;font-size:8px;color:#000;font-weight:400;-webkit-text-stroke:0.2px #000">16</div>
<div class="r" style="left:23px;top:344px;width:79px;height:20px;overflow:hidden">
<div class="t" style="left:0px;top:2.88px;font-size:9px;color:#000;font-weight:400;letter-spacing:0.15px;">Thomas Strong</div>
</div>
<div class="r" style="left:105px;top:344px;width:200px;height:20px;overflow:hidden">
<div class="t" style="left:0px;top:2.88px;font-size:9px;color:#000;font-weight:400;letter-spacing:0.15px;">4575 Stuart Street</div>
</div>
<div class="t" style="left:300px;top:344.54px;width:20px;text-align:right;font-size:10px;color:#000">3</div>
<div class="t" style="left:356px;top:344.54px;width:20px;text-align:right;font-size:10px;color:#000">4</div>
<div class="t" style="left:464px;top:344.54px;width:20px;text-align:right;font-size:10px;color:#000">7</div>
<div class="t" style="left:1px;top:361.73px;width:20px;text-align:center;font-size:8px;color:#000;font-weight:400;-webkit-text-stroke:0.2px #000">17</div>
<div class="r" style="left:23px;top:358px;width:79px;height:20px;overflow:hidden">
<div class="t" style="left:0px;top:2.88px;font-size:9px;color:#000;font-weight:400;letter-spacing:0.15px;">Rosanna Bennett</div>
</div>
<div class="r" style="left:105px;top:358px;width:103px;height:20px;overflow:hidden">
<div class="t" style="left:0px;top:2.88px;font-size:9px;color:#000;font-weight:400;letter-spacing:0.15px;">721 Oliverio Drive</div>
</div>
<div class="t" style="left:244px;top:358.54px;width:20px;text-align:right;font-size:10px;color:#000">1</div>
<div class="t" style="left:412px;top:358.54px;width:20px;text-align:right;font-size:10px;color:#000">1</div>
<div class="t" style="left:464px;top:358.54px;width:20px;text-align:right;font-size:10px;color:#000">2</div>
<div class="t" style="left:1px;top:375.73px;width:20px;text-align:center;font-size:8px;color:#000;font-weight:400;-webkit-text-stroke:0.2px #000">18</div>
<div class="r" style="left:23px;top:372px;width:79px;height:20px;overflow:hidden">
<div class="t" style="left:0px;top:2.88px;font-size:9px;color:#000;font-weight:400;letter-spacing:0.15px;">Lena Cohan</div>
</div>
<div class="r" style="left:105px;top:372px;width:103px;height:20px;overflow:hidden">
<div class="t" style="left:0px;top:2.88px;font-size:9px;color:#000;font-weight:400;letter-spacing:0.15px;">4585 Radford Street</div>
</div>
<div class="t" style="left:244px;top:372.54px;width:20px;text-align:right;font-size:10px;color:#000">3</div>
<div class="t" style="left:356px;top:372.54px;width:20px;text-align:right;font-size:10px;color:#000">4</div>
<div class="t" style="left:464px;top:372.54px;width:20px;text-align:right;font-size:10px;color:#000">7</div>
<div class="t" style="left:1px;top:389.73px;width:20px;text-align:center;font-size:8px;color:#000;font-weight:400;-webkit-text-stroke:0.2px #000">19</div>
<div class="r" style="left:23px;top:386px;width:79px;height:20px;overflow:hidden">
<div class="t" style="left:0px;top:2.88px;font-size:9px;color:#000;font-weight:400;letter-spacing:0.15px;">Ernest Killion</div>
</div>
<div class="r" style="left:105px;top:386px;width:200px;height:20px;overflow:hidden">
<div class="t" style="left:0px;top:2.88px;font-size:9px;color:#000;font-weight:400;letter-spacing:0.15px;">1201 Felosa Drive</div>
</div>
<div class="t" style="left:300px;top:386.54px;width:20px;text-align:right;font-size:10px;color:#000">2</div>
<div class="t" style="left:464px;top:386.54px;width:20px;text-align:right;font-size:10px;color:#000">2</div>
<div class="t" style="left:1px;top:403.73px;width:20px;text-align:center;font-size:8px;color:#000;font-weight:400;-webkit-text-stroke:0.2px #000">20</div>
<div class="r" style="left:23px;top:400px;width:79px;height:20px;overflow:hidden">
<div class="t" style="left:0px;top:2.88px;font-size:9px;color:#000;font-weight:400;letter-spacing:0.15px;">Gloria Duplessis</div>
</div>
<div class="r" style="left:105px;top:400px;width:200px;height:20px;overflow:hidden">
<div class="t" style="left:0px;top:2.88px;font-size:9px;color:#000;font-weight:400;letter-spacing:0.15px;">3628 Abner Road</div>
</div>
<div class="t" style="left:412px;top:400.54px;width:20px;text-align:right;font-size:10px;color:#000">1</div>
<div class="t" style="left:464px;top:400.54px;width:20px;text-align:right;font-size:10px;color:#000">1</div>
<div class="t" style="left:1px;top:417.73px;width:20px;text-align:center;font-size:8px;color:#000;font-weight:400;-webkit-text-stroke:0.2px #000">21</div>
<div class="r" style="left:23px;top:414px;width:79px;height:20px;overflow:hidden">
<div class="t" style="left:0px;top:2.88px;font-size:9px;color:#000;font-weight:400;letter-spacing:0.15px;">Brandy Lynch</div>
</div>
<div class="r" style="left:105px;top:414px;width:200px;height:20px;overflow:hidden">
<div class="t" style="left:0px;top:2.88px;font-size:9px;color:#000;font-weight:400;letter-spacing:0.15px;">4185 Hood Avenue</div>
</div>
<div class="t" style="left:356px;top:414.54px;width:20px;text-align:right;font-size:10px;color:#000">4</div>
<div class="t" style="left:464px;top:414.54px;width:20px;text-align:right;font-size:10px;color:#000">4</div>
<div class="t" style="left:1px;top:431.73px;width:20px;text-align:center;font-size:8px;color:#000;font-weight:400;-webkit-text-stroke:0.2px #000">22</div>
<div class="r" style="left:23px;top:428px;width:79px;height:20px;overflow:hidden">
<div class="t" style="left:0px;top:2.88px;font-size:9px;color:#000;font-weight:400;letter-spacing:0.15px;">Cory Porter</div>
</div>
<div class="r" style="left:105px;top:428px;width:200px;height:20px;overflow:hidden">
<div class="t" style="left:0px;top:2.88px;font-size:9px;color:#000;font-weight:400;letter-spacing:0.15px;">238 Stanton Hollow Road</div>
</div>
<div class="t" style="left:412px;top:428.54px;width:20px;text-align:right;font-size:10px;color:#000">2</div>
<div class="t" style="left:464px;top:428.54px;width:20px;text-align:right;font-size:10px;color:#000">2</div>
<div class="t" style="left:1px;top:445.73px;width:20px;text-align:center;font-size:8px;color:#000;font-weight:400;-webkit-text-stroke:0.2px #000">23</div>
<div class="r" style="left:23px;top:442px;width:79px;height:20px;overflow:hidden">
<div class="t" style="left:0px;top:2.88px;font-size:9px;color:#000;font-weight:400;letter-spacing:0.15px;">Minnie Spencer</div>
</div>
<div class="r" style="left:105px;top:442px;width:103px;height:20px;overflow:hidden">
<div class="t" style="left:0px;top:2.88px;font-size:9px;color:#000;font-weight:400;letter-spacing:0.15px;">4098 Neuport Lane</div>
</div>
<div class="t" style="left:244px;top:442.54px;width:20px;text-align:right;font-size:10px;color:#000">1</div>
<div class="t" style="left:300px;top:442.54px;width:20px;text-align:right;font-size:10px;color:#000">1</div>
<div class="t" style="left:356px;top:442.54px;width:20px;text-align:right;font-size:10px;color:#000">1</div>
<div class="t" style="left:464px;top:442.54px;width:20px;text-align:right;font-size:10px;color:#000">3</div>
<div class="t" style="left:1px;top:459.73px;width:20px;text-align:center;font-size:8px;color:#000;font-weight:400;-webkit-text-stroke:0.2px #000">24</div>
<div class="r" style="left:23px;top:456px;width:79px;height:20px;overflow:hidden">
<div class="t" style="left:0px;top:2.88px;font-size:9px;color:#000;font-weight:400;letter-spacing:0.15px;">Cynthia McFadden</div>
</div>
<div class="r" style="left:105px;top:456px;width:200px;height:20px;overflow:hidden">
<div class="t" style="left:0px;top:2.88px;font-size:9px;color:#000;font-weight:400;letter-spacing:0.15px;">981 Washington Avenue</div>
</div>
<div class="t" style="left:300px;top:456.54px;width:20px;text-align:right;font-size:10px;color:#000">2</div>
<div class="t" style="left:356px;top:456.54px;width:20px;text-align:right;font-size:10px;color:#000">3</div>
<div class="t" style="left:464px;top:456.54px;width:20px;text-align:right;font-size:10px;color:#000">5</div>
<div class="t" style="left:1px;top:473.73px;width:20px;text-align:center;font-size:8px;color:#000;font-weight:400;-webkit-text-stroke:0.2px #000">25</div>
<div class="r" style="left:23px;top:470px;width:79px;height:20px;overflow:hidden">
<div class="t" style="left:0px;top:2.88px;font-size:9px;color:#000;font-weight:400;letter-spacing:0.15px;">Michael Miller</div>
</div>
<div class="r" style="left:105px;top:470px;width:103px;height:20px;overflow:hidden">
<div class="t" style="left:0px;top:2.88px;font-size:9px;color:#000;font-weight:400;letter-spacing:0.15px;">801 Upton Avenue</div>
</div>
<div class="t" style="left:244px;top:470.54px;width:20px;text-align:right;font-size:10px;color:#000">5</div>
<div class="t" style="left:464px;top:470.54px;width:20px;text-align:right;font-size:10px;color:#000">5</div>
<div class="t" style="left:1px;top:487.73px;width:20px;text-align:center;font-size:8px;color:#000;font-weight:400;-webkit-text-stroke:0.2px #000">26</div>
<div class="r" style="left:23px;top:484px;width:79px;height:20px;overflow:hidden">
<div class="t" style="left:0px;top:2.88px;font-size:9px;color:#000;font-weight:400;letter-spacing:0.15px;">Mary Myers</div>
</div>
<div class="r" style="left:105px;top:484px;width:200px;height:20px;overflow:hidden">
<div class="t" style="left:0px;top:2.88px;font-size:9px;color:#000;font-weight:400;letter-spacing:0.15px;">838 Willis Avenue</div>
</div>
<div class="t" style="left:300px;top:484.54px;width:20px;text-align:right;font-size:10px;color:#000">1</div>
<div class="t" style="left:412px;top:484.54px;width:20px;text-align:right;font-size:10px;color:#000">1</div>
<div class="t" style="left:464px;top:484.54px;width:20px;text-align:right;font-size:10px;color:#000">2</div>
<div class="t" style="left:1px;top:501.73px;width:20px;text-align:center;font-size:8px;color:#000;font-weight:400;-webkit-text-stroke:0.2px #000">27</div>
<div class="r" style="left:23px;top:498px;width:79px;height:20px;overflow:hidden">
<div class="t" style="left:0px;top:2.88px;font-size:9px;color:#000;font-weight:400;letter-spacing:0.15px;">Audrey West</div>
</div>
<div class="r" style="left:105px;top:498px;width:103px;height:20px;overflow:hidden">
<div class="t" style="left:0px;top:2.88px;font-size:9px;color:#000;font-weight:400;letter-spacing:0.15px;">838 Caldwell Road</div>
</div>
<div class="t" style="left:244px;top:498.54px;width:20px;text-align:right;font-size:10px;color:#000">3</div>
<div class="t" style="left:412px;top:498.54px;width:20px;text-align:right;font-size:10px;color:#000">4</div>
<div class="t" style="left:464px;top:498.54px;width:20px;text-align:right;font-size:10px;color:#000">7</div>
<div class="t" style="left:1px;top:515.73px;width:20px;text-align:center;font-size:8px;color:#000;font-weight:400;-webkit-text-stroke:0.2px #000">28</div>
<div class="r" style="left:23px;top:512px;width:79px;height:20px;overflow:hidden">
<div class="t" style="left:0px;top:2.88px;font-size:9px;color:#000;font-weight:400;letter-spacing:0.15px;">Mary Hudson</div>
</div>
<div class="r" style="left:105px;top:512px;width:200px;height:20px;overflow:hidden">
<div class="t" style="left:0px;top:2.88px;font-size:9px;color:#000;font-weight:400;letter-spacing:0.15px;">2102 Retreat Avenue</div>
</div>
<div class="t" style="left:300px;top:512.53px;width:20px;text-align:right;font-size:10px;color:#000">2</div>
<div class="t" style="left:464px;top:512.53px;width:20px;text-align:right;font-size:10px;color:#000">2</div>
<div class="t" style="left:1px;top:529.73px;width:20px;text-align:center;font-size:8px;color:#000;font-weight:400;-webkit-text-stroke:0.2px #000">29</div>
<div class="r" style="left:23px;top:526px;width:79px;height:20px;overflow:hidden">
<div class="t" style="left:0px;top:2.88px;font-size:9px;color:#000;font-weight:400;letter-spacing:0.15px;">Gordon Hawes</div>
</div>
<div class="r" style="left:105px;top:526px;width:200px;height:20px;overflow:hidden">
<div class="t" style="left:0px;top:2.88px;font-size:9px;color:#000;font-weight:400;letter-spacing:0.15px;">4881 Stiles Street</div>
</div>
<div class="t" style="left:412px;top:526.53px;width:20px;text-align:right;font-size:10px;color:#000">3</div>
<div class="t" style="left:464px;top:526.53px;width:20px;text-align:right;font-size:10px;color:#000">3</div>
<div class="t" style="left:1px;top:543.73px;width:20px;text-align:center;font-size:8px;color:#000;font-weight:400;-webkit-text-stroke:0.2px #000">30</div>
<div class="r" style="left:23px;top:540px;width:79px;height:20px;overflow:hidden">
<div class="t" style="left:0px;top:2.88px;font-size:9px;color:#000;font-weight:400;letter-spacing:0.15px;">Randall Kelly</div>
</div>
<div class="r" style="left:105px;top:540px;width:103px;height:20px;overflow:hidden">
<div class="t" style="left:0px;top:2.88px;font-size:9px;color:#000;font-weight:400;letter-spacing:0.15px;">4143 Berry Street</div>
</div>
<div class="t" style="left:244px;top:540.53px;width:20px;text-align:right;font-size:10px;color:#000">1</div>
<div class="t" style="left:356px;top:540.53px;width:20px;text-align:right;font-size:10px;color:#000">1</div>
<div class="t" style="left:412px;top:540.53px;width:20px;text-align:right;font-size:10px;color:#000">5</div>
<div class="t" style="left:464px;top:540.53px;width:20px;text-align:right;font-size:10px;color:#000">7</div>
<div class="t" style="left:1px;top:557.73px;width:20px;text-align:center;font-size:8px;color:#000;font-weight:400;-webkit-text-stroke:0.2px #000">31</div>
<div class="r" style="left:23px;top:554px;width:79px;height:20px;overflow:hidden">
<div class="t" style="left:0px;top:2.88px;font-size:9px;color:#000;font-weight:400;letter-spacing:0.15px;">Brenda Strange</div>
</div>
<div class="r" style="left:105px;top:554px;width:103px;height:20px;overflow:hidden">
<div class="t" style="left:0px;top:2.88px;font-size:9px;color:#000;font-weight:400;letter-spacing:0.15px;">3427 Cottrill Lane</div>
</div>
<div class="t" style="left:244px;top:554.53px;width:20px;text-align:right;font-size:10px;color:#000">1</div>
<div class="t" style="left:300px;top:554.53px;width:20px;text-align:right;font-size:10px;color:#000">1</div>
<div class="t" style="left:356px;top:554.53px;width:20px;text-align:right;font-size:10px;color:#000">1</div>
<div class="t" style="left:464px;top:554.53px;width:20px;text-align:right;font-size:10px;color:#000">3</div>
<div class="t" style="left:1px;top:571.73px;width:20px;text-align:center;font-size:8px;color:#000;font-weight:400;-webkit-text-stroke:0.2px #000">32</div>
<div class="r" style="left:23px;top:568px;width:79px;height:20px;overflow:hidden">
<div class="t" style="left:0px;top:2.88px;font-size:9px;color:#000;font-weight:400;letter-spacing:0.15px;">Deborah Distefano</div>
</div>
<div class="r" style="left:105px;top:568px;width:200px;height:20px;overflow:hidden">
<div class="t" style="left:0px;top:2.88px;font-size:9px;color:#000;font-weight:400;letter-spacing:0.15px;">2475 Broadcast Drive</div>
</div>
<div class="t" style="left:300px;top:568.53px;width:20px;text-align:right;font-size:10px;color:#000">2</div>
<div class="t" style="left:356px;top:568.53px;width:20px;text-align:right;font-size:10px;color:#000">3</div>
<div class="t" style="left:464px;top:568.53px;width:20px;text-align:right;font-size:10px;color:#000">5</div>
</div>
<div class="r" style="left:21px;top:208px;width:1px;height:373px;background:#1f1fe0;"></div>
<div class="r" style="left:484px;top:208px;width:3px;height:373px;background:#1f1fe0;"></div>
<svg class="s" style="left:22px;top:542px;" width="462" height="2" viewBox="0 0 462 2"><path d="M3 1H462" stroke="#1f1fe0" stroke-width="2" stroke-dasharray="9 3"/></svg>
<div class="r" style="left:805px;top:197px;width:21px;height:384px;background:#e6e6e6;"></div>
<div class="r" style="left:808px;top:214px;width:15px;height:353px;background:#dadada;"></div>
<div class="r" style="left:808px;top:199px;width:15px;height:15px;background:#fff;box-sizing:border-box;border:1px solid #c6c6c6"></div>
<svg class="s" style="left:812px;top:203px;" width="7" height="5" viewBox="0 0 7 5"><path d="M0 4.5h7L3.5 0.5z" fill="#666"/></svg>
<div class="r" style="left:808px;top:227px;width:15px;height:98px;background:#fff;box-sizing:border-box;border:1px solid #c6c6c6"></div>
<div class="r" style="left:808px;top:567px;width:15px;height:15px;background:#fff;box-sizing:border-box;border:1px solid #c6c6c6"></div>
<svg class="s" style="left:812px;top:572px;" width="7" height="5" viewBox="0 0 7 5"><path d="M0 0.5h7L3.5 4.5z" fill="#666"/></svg>
<div class="r" style="left:1px;top:581px;width:825px;height:28px;background:#e6e6e6;"></div>
<div class="r" style="left:1px;top:581px;width:486px;height:1px;background:#b4b4b4;"></div>
<div class="r" style="left:487px;top:581px;width:317px;height:1px;background:#979797;"></div>
<svg class="s" style="left:28px;top:591px;" width="5" height="8" viewBox="0 0 5 8"><path d="M4.5 0L0.5 4L4.5 8z" fill="#c0c0c0"/></svg>
<svg class="s" style="left:57px;top:591px;" width="5" height="8" viewBox="0 0 5 8"><path d="M0.5 0L4.5 4L0.5 8z" fill="#c0c0c0"/></svg>
<div class="r" style="left:101px;top:581px;width:65px;height:25px;background:#fff;box-sizing:border-box;border:1px solid #c6c6c6;border-top:none"></div>
<div class="r" style="left:101px;top:604px;width:65px;height:2px;background:#217346;"></div>
<div class="t" style="left:113px;top:584.67px;font-size:12.5px;color:#217346;font-weight:700;letter-spacing:-0.3px;-webkit-text-stroke:0.3px #217346">Sheet1</div>
<svg class="s" style="left:198px;top:586px;" width="18" height="18" viewBox="0 0 18 18"><circle cx="9" cy="9" r="7.6" fill="none" stroke="#777" stroke-width="1.2"/><path d="M9 5v8M5 9h8" stroke="#666" stroke-width="1.6"/></svg>
<div class="r" style="left:496px;top:590px;width:2px;height:2px;background:#a8a8a8;"></div>
<div class="r" style="left:496px;top:594px;width:2px;height:2px;background:#a8a8a8;"></div>
<div class="r" style="left:496px;top:598px;width:2px;height:2px;background:#a8a8a8;"></div>
<div class="r" style="left:513px;top:588px;width:292px;height:15px;background:#dadada;"></div>
<div class="r" style="left:513px;top:588px;width:15px;height:15px;background:#fff;box-sizing:border-box;border:1px solid #c6c6c6"></div>
<svg class="s" style="left:518px;top:592px;" width="4" height="7" viewBox="0 0 4 7"><path d="M4 0V7L0 3.5z" fill="#555"/></svg>
<div class="r" style="left:528px;top:588px;width:110px;height:15px;background:#fff;box-sizing:border-box;border:1px solid #c6c6c6"></div>
<div class="r" style="left:790px;top:588px;width:15px;height:15px;background:#fff;box-sizing:border-box;border:1px solid #c6c6c6"></div>
<svg class="s" style="left:796px;top:592px;" width="4" height="7" viewBox="0 0 4 7"><path d="M0 0V7L4 3.5z" fill="#555"/></svg>
<div class="r" style="left:1px;top:609px;width:825px;height:1px;background:#c6c6c6;"></div>
<div class="r" style="left:1px;top:610px;width:825px;height:21px;background:#f0f0f0;"></div>
<div class="t" style="left:8.6px;top:610.19px;font-size:11px;color:#444;font-weight:400;letter-spacing:-0.2px;">Ready</div>
<svg class="s" style="left:534px;top:612px;" width="15" height="15" viewBox="0 0 15 15"><path d="M1.5 1.5h12v12h-12zM1.5 5.5h12M1.5 9.5h12M5.5 1.5v12M9.5 1.5v12" fill="none" stroke="#666" stroke-width="1"/></svg>
<svg class="s" style="left:0;top:0" width="660" height="632"><rect x="573.5" y="613.5" width="13" height="12" fill="none" stroke="#666" stroke-width="1"/><rect x="576.5" y="615.5" width="7" height="8" fill="none" stroke="#666" stroke-width="1"/><path d="M578 617.5h4M578 619.5h4M578 621.5h4" stroke="#666" stroke-width="1"/></svg>
<div class="r" style="left:599px;top:610px;width:38px;height:21px;background:#c6c6c6;"></div>
<svg class="s" style="left:0;top:0" width="660" height="632"><rect x="611.5" y="613.5" width="13" height="12" fill="none" stroke="#555" stroke-width="1"/><path d="M611.5 619.5H619.5V613.5M615.5 613.5V619.5" fill="none" stroke="#555" stroke-width="1"/></svg>
<div class="r" style="left:641px;top:619px;width:7px;height:1.5px;background:#555;"></div>
<div class="r" style="left:652px;top:619px;width:100px;height:1px;background:#a0a0a0;"></div>
<div class="r" style="left:702px;top:617px;width:1px;height:5px;background:#a0a0a0;"></div>
<div class="r" style="left:679px;top:614px;width:4px;height:11px;background:#666;"></div>
<svg class="s" style="left:756px;top:615px;" width="9" height="9" viewBox="0 0 9 9"><path d="M4.5 0.5v8M0.5 4.5h8" stroke="#555" stroke-width="1.6"/></svg>
<div class="t" style="left:779px;top:610.49px;font-size:11px;color:#444;font-weight:400;letter-spacing:-0.3px;">60%</div>
<svg class="s" style="left:629px;top:611px;" width="15" height="21" viewBox="0 0 15 21"><path d="M1.5 1.5V17.5L5.2 13.9L8.1 19.9L10.7 18.8L7.9 12.9H12.9Z" fill="#fff" stroke="#000" stroke-width="1" stroke-linejoin="miter"/></svg>
<div class="r" style="left:0px;top:0px;width:1px;height:632px;background:#217346;"></div>
<div class="r" style="left:826px;top:58px;width:1px;height:574px;background:#217346;"></div>
<div class="r" style="left:0px;top:631px;width:827px;height:1px;background:#217346;"></div>
</body></html>
